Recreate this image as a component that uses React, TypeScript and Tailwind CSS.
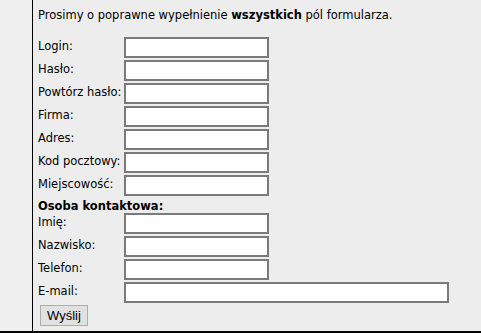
import React from "react";

const rows1 = ["Login:", "Hasło:", "Powtórz hasło:", "Firma:", "Adres:", "Kod pocztowy:", "Miejscowość:"];
const rows2 = ["Imię:", "Nazwisko:", "Telefon:"];

function Row({ label, wide }: { label: string; wide?: boolean }) {
  return (
    <div className="flex h-[23px] items-start">
      <div className="w-[86px] shrink-0 whitespace-nowrap pt-[1px] leading-[16px]">{label}</div>
      <input
        type="text"
        className={`h-[21px] ${wide ? "w-[325px]" : "w-[145px]"} border-2 border-[#7a7a7a] bg-white outline-none`}
      />
    </div>
  );
}

export default function App() {
  return (
    <div
      className="flex h-[333px] w-[481px] border-b-2 border-black bg-[#ededed] text-[11.5px] text-black"
      style={{ fontFamily: "'DejaVu Sans', Verdana, sans-serif" }}
    >
      <div className="w-[33px] shrink-0 border-r border-black bg-[#efefef]" />
      <div className="flex flex-1 flex-col pl-[5px] pt-[7px]">
        <p className="h-[30px] whitespace-nowrap leading-[16px]">
          Prosimy o poprawne wypełnienie <b>wszystkich</b> pól formularza.
        </p>
        {rows1.map((r) => (
          <Row key={r} label={r} />
        ))}
        <div className="h-[15px] pt-[1px] font-bold leading-[14px]">Osoba kontaktowa:</div>
        {rows2.map((r) => (
          <Row key={r} label={r} />
        ))}
        <Row label="E-mail:" wide />
        <div className="pl-[2px]">
          <button
            className="h-[21px] w-[48px] border border-[#adadad] bg-[#e1e1e1] text-[13px] leading-[18px]"
            style={{ fontFamily: "'Liberation Sans', Arial, sans-serif" }}
          >
            Wyślij
          </button>
        </div>
      </div>
    </div>
  );
}
